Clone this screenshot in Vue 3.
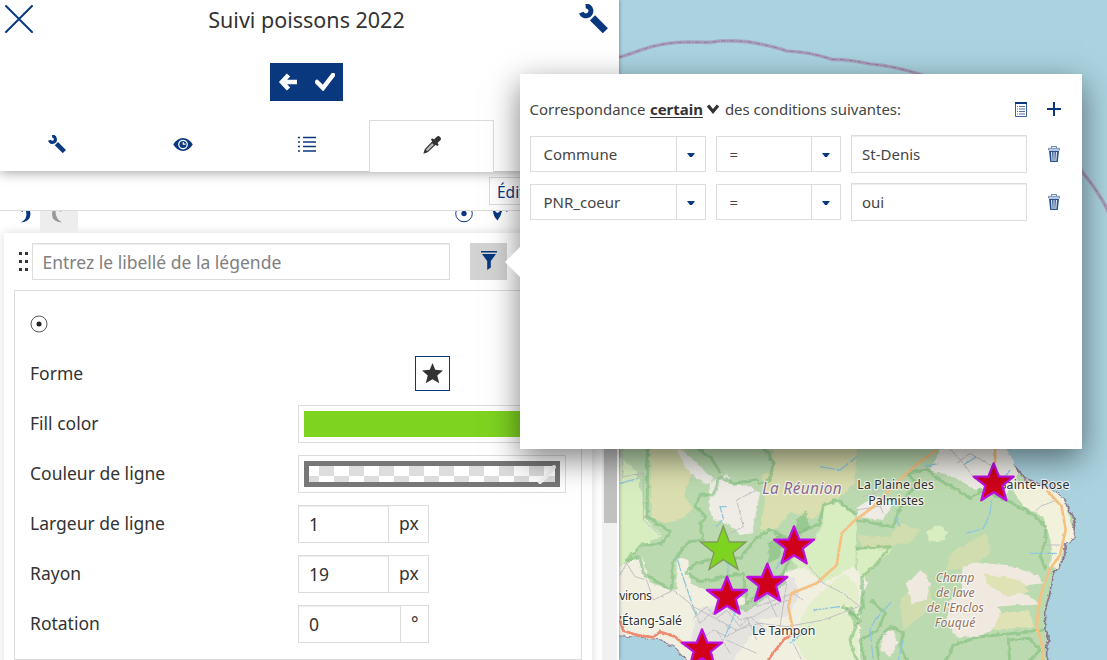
<script setup>
const tabs = ['wrench', 'eye', 'list', 'dropper']
const measures = [
  { label: 'Largeur de ligne', value: '1', unit: 'px' },
  { label: 'Rayon', value: '19', unit: 'px' },
  { label: 'Rotation', value: '0', unit: '°', narrow: true },
]
const conditions = [
  { attr: 'Commune', op: '=', value: 'St-Denis' },
  { attr: 'PNR_coeur', op: '=', value: 'oui' },
]
const redStars = [[552, 256], [472, 368], [351, 407], [276, 565], [1151, 67]]
</script>

<template>
  <div class="app">
    <aside class="panel">
      <header class="head">
        <div class="titlebar">
          <svg class="close" viewBox="0 0 28 28"><path d="M1 1 27 27M27 1 1 27" /></svg>
          <h1>Suivi poissons 2022</h1>
          <svg class="big-wrench" viewBox="0 0 88 88"><path class="w-head" d="M7 26A15 15 0 1 0 20 6" /><path class="w-arm" d="M41 42 80 81" /></svg>
        </div>
        <div class="actions">
          <svg viewBox="0 0 20 18"><path d="M10.500 2 4 9 10.500 16M4 9H19" /></svg>
          <svg viewBox="0 0 20 18"><path d="M2 9 8 15 18 2" /></svg>
        </div>
        <nav class="tabs">
          <div v-for="t in tabs" :key="t" class="tab" :class="{ active: t === 'dropper' }">
            <svg v-if="t === 'wrench'" class="ic18" viewBox="0 0 88 88"><path class="w-head" d="M7 26A15 15 0 1 0 20 6" /><path class="w-arm" d="M41 42 80 81" /></svg>
            <svg v-else-if="t === 'eye'" class="eye" viewBox="0 0 60 40"><path fill="#0a387f" d="M0 20Q12 0 30 0T60 20Q48 40 30 40T0 20Z" /><circle cx="30" cy="20" r="15" fill="#fff" /><circle cx="30" cy="20" r="11" fill="#0a387f" /><path d="M31 13v6h7" fill="none" stroke="#fff" stroke-width="4" /></svg>
            <svg v-else-if="t === 'list'" class="ic18" viewBox="0 0 18 18"><path d="M0 2.500h2m3 0h13M0 7h2m3 0h13M0 11.500h2m3 0h13M0 16h2m3 0h13" fill="none" stroke="#0a387f" stroke-width="1.400" /></svg>
            <svg v-else class="ic18" viewBox="0 0 54 54"><path d="M5 49 8 39 30 16 38 24 15 46Z" fill="#bbb" stroke="#333" stroke-width="3.500" /><path d="M28 11 43 26" stroke="#333" stroke-width="7" stroke-linecap="round" /><path d="M35 19 46 8" stroke="#333" stroke-width="15" stroke-linecap="round" /><path d="M1 53 15 48 6 39Z" fill="#333" /></svg>
          </div>
        </nav>
      </header>
      <div class="subbar"><button class="edit">Éditer</button></div>
      <div class="scroller">
        <div class="content">
          <div class="cutrow">
            <svg class="moon1" viewBox="0 0 10 12"><path d="M5 0Q7 8 0 11.500Q9 11 9.500 3L9 0ZM0 0H2V1Z" fill="#0a387f" /></svg>
            <span class="greytab"><svg viewBox="0 0 10 12"><path d="M3.500 0Q3.500 8 10 11.500Q0 11 0 3L.5 0ZM7.500 0H9.500L8.500 1Z" fill="#999" /></svg></span>
            <svg class="cutdot" viewBox="0 0 20 12"><circle cx="10" cy="2.500" r="8.300" fill="#fff" stroke="#0a387f" /><circle cx="10" cy="2.500" r="2.700" fill="#0a387f" /></svg>
            <svg class="cutpin" viewBox="0 0 18 12"><path d="M1 0H10Q9 5 5.500 9.500Q1 5 1 0Z" fill="#0a387f" /><circle cx="5.500" cy="-.5" r="2.300" fill="#fff" /><path d="M14 .3h1.500" stroke="#0a387f" stroke-width=".7" /></svg>
          </div>
          <section class="card">
            <div class="legend">
              <span class="grip"><i v-for="n in 6" :key="n"></i></span>
              <div class="legend-input">Entrez le libellé de la légende</div>
              <button class="filter"><svg viewBox="0 0 16 19"><path d="M0 0H16V1.500H0ZM1 3H15L9.800 10V16.500L6.200 19V10Z" fill="#0a387f" /></svg></button>
            </div>
            <div class="fieldset">
              <svg class="point" viewBox="0 0 18 18"><circle cx="9" cy="9" r="8" /><circle cx="9" cy="9" r="2.500" class="core" /></svg>
              <div class="row"><label>Forme</label><div class="shape"><svg viewBox="0 0 62 62"><path d="M31 0 39 20 62 22 45 37 51 60 31 48 11 60 17 37 0 22 23 20Z" fill="#333" /></svg></div></div>
              <div class="row"><label>Fill color</label><div class="color"><div class="green"></div></div></div>
              <div class="row"><label>Couleur de ligne</label><div class="color"><div class="checker"><svg viewBox="0 0 18 19"><path d="M2 17 10 10 16 2" /></svg></div></div></div>
              <div v-for="m in measures" :key="m.label" class="row">
                <label>{{ m.label }}</label>
                <div class="measure"><span class="val">{{ m.value }}</span><span class="unit" :class="{ narrow: m.narrow }">{{ m.unit }}</span></div>
              </div>
            </div>
          </section>
        </div>
        <div class="track"><div class="thumb"></div></div>
      </div>
    </aside>

    <svg class="map" viewBox="27 0 1464 1980" preserveAspectRatio="none">
      <defs>
        <filter id="organic" x="-5%" y="-5%" width="110%" height="110%"><feTurbulence type="fractalNoise" baseFrequency=".06" numOctaves="3" seed="4" result="n" /><feDisplacementMap in="SourceGraphic" in2="n" scale="13" xChannelSelector="R" yChannelSelector="G" /></filter>
        <filter id="wobble" x="-5%" y="-5%" width="110%" height="110%"><feTurbulence type="fractalNoise" baseFrequency=".09" numOctaves="2" seed="9" result="n" /><feDisplacementMap in="SourceGraphic" in2="n" scale="7" xChannelSelector="R" yChannelSelector="G" /></filter>
      </defs>
      <rect x="27" width="1464" height="1980" fill="#aad3df" />
      <g fill="none">
        <path d="M27 172Q60 162 95 149Q160 127 235 126L300 127L330 123Q400 120 450 132Q500 142 530 153Q600 156 665 178Q720 178 780 192Q850 198 920 220C1150 290 1340 390 1420 520Q1470 580 1500 645" stroke="#a99bb8" stroke-width="11" opacity=".8" />
        <path d="M27 172Q60 162 95 149Q160 127 235 126L300 127L330 123Q400 120 450 132Q500 142 530 153Q600 156 665 178Q720 178 780 192Q850 198 920 220C1150 290 1340 390 1420 520Q1470 580 1500 645" stroke="#926b98" stroke-width="2.500" stroke-dasharray="14 4 4 4" />
      </g>
      <g transform="translate(0 1320)">
        <g filter="url(#organic)">
          <path d="M10 -20H1165L1181 27L1211 75L1250 120L1310 140L1361 175L1381 220L1396 240L1388 270L1395 295L1365 310V345L1345 385L1328 400L1320 460L1308 500L1305 560L1318 600L1310 620V680H245L200 625L150 598L90 590L10 585Z" fill="#bcdab0" stroke="#8b7590" stroke-width="5" stroke-linejoin="round" />
          <!-- vegetation -->
          <g fill="#dbdfaf">
            <path d="M120 10H205L240 55L250 90L220 165L250 205L210 240L160 250L125 230Z" />
            <path d="M490 10H740L735 130L690 170L650 190L610 240L540 215L500 265L450 270L465 190L455 110L490 90Z" />
            <path d="M745 285L840 290L870 250L930 270L900 310L850 315L800 360L745 300ZM1020 340L1130 280L1140 340L1080 385L1010 390ZM870 480L950 395L970 500L880 570Z" opacity=".65" />
          </g>
          <path d="M10 40L80 90L110 240L155 285L95 320L50 360L10 400ZM640 195L690 190L740 235L735 400L700 470L600 440L570 390L545 360L610 300L640 250ZM741 325L845 330L770 400L741 490ZM950 275L990 255L1015 275L1005 300L960 305Z" fill="#d9eec0" />
          <path d="M300 130L350 100L365 130L420 140L450 160L440 210L425 280L390 285L350 250L310 240L295 190ZM190 10L250 60L310 120L290 135L230 90ZM1000 10H1181L1225 100L1190 160L1100 150L1030 110L960 90ZM741 200L800 170L850 190L820 240L741 230Z" fill="#eeece5" />
          <path d="M10 390L95 345L120 430L200 450L200 350L235 360L240 430L300 455L360 470L440 480L520 400L580 380L640 430L730 380L775 430L750 470L750 680H250L200 625L150 598L90 590L10 585Z" fill="#f0efe0" />
          <path d="M270 505L360 490L430 510L460 560L420 590L370 660H270L240 600ZM430 470L550 410L570 460L530 530L420 540Z" fill="#dedede" opacity=".7" />
          <path d="M1190 120L1310 140L1361 175L1395 295L1365 310L1345 385L1320 380L1325 310L1300 230L1240 200Z" fill="#f2f1dc" />
          <path d="M1055 380L1100 368L1190 375L1280 405L1300 430L1210 440L1290 490L1160 500L1190 540L1110 590L1040 590L1010 550L1020 480L1060 460ZM890 430L935 390L960 430L950 480L905 490ZM820 580L850 570L865 610L840 650L810 630Z" fill="#f0e9df" />
          <path d="M1120 400L1230 420L1260 455L1190 470L1130 430ZM1170 520L1260 510L1270 560L1150 570Z" fill="#dfe2b5" />
          <path d="M590 500L640 450L700 400L745 440V680H600L550 600Z" fill="#e3efcb" />
          <!-- inner shade along protected areas -->
          <g fill="none" stroke="#80be7b" stroke-width="9" stroke-linejoin="round" stroke-linecap="round" opacity=".6">
            <path d="M112 10V230L180 275L155 310L95 315L50 360L90 350L100 400L185 450L190 365L235 305L280 300L270 250L290 230L255 200L270 165L310 165L330 110L370 130L440 120" />
            <path d="M450 10L490 65L480 120L445 130M240 10L300 50L330 95M480 270L530 295L630 250L640 195L680 180L735 220M225 395L260 370L330 350L390 355L430 305L475 270M225 395L270 425L400 400L410 490L520 400L545 340" />
            <path d="M741 240L850 260L875 190L920 130L890 100L950 90L990 120L1085 175L1110 150L1190 180L1270 225L1307 260V300L1290 345L1305 385M741 325L840 320L800 370L755 410L760 500L741 530M1010 660L1030 615L1110 590L1270 575L1300 570M770 680L750 600L805 570L825 520L785 480M810 680L800 610L840 560L880 580L870 620L900 680M1200 680L1195 600L1260 595L1290 630L1240 680M700 500L750 540L720 600L745 680" />
          </g>
          <g fill="#6db36f" opacity=".45"><path d="M560 240L590 210L600 260L560 285ZM475 310L515 280L510 350L475 370ZM705 500L730 505L750 550L735 560ZM375 500L430 480L520 400L530 430L410 515Z" /></g>
        </g>
        <g filter="url(#wobble)">
          <!-- streams -->
          <path d="M320 260L340 235L330 200L350 200M355 360L350 460L375 520L340 600M200 350L215 400L260 530M1145 180L1140 220L1120 265L1070 280M845 485L795 540L780 570L790 660M880 600L865 660M520 350L490 400M540 610L600 560M630 80L690 90L741 50M1060 75L1100 50M945 80L985 70M1260 340L1340 340M1200 90L1170 130M610 510L690 500M30 130L85 115M870 260L855 230" fill="none" stroke="#8fc7dc" stroke-width="4" stroke-dasharray="45 5" />
          <!-- minor roads -->
          <g fill="none" stroke="#c2bfc2" stroke-width="3">
            <path d="M38 27V110L100 100V240L150 285M27 410L50 370L75 410L110 420L130 480L190 450L240 490L270 550L300 520L350 500L390 540L430 530L500 490L540 480M350 285L400 260L380 180L440 150M590 370L640 430L700 460L750 500M250 500L380 570L450 550L530 560L640 540L745 500M320 570L360 640M410 530L440 600M350 600L440 640M550 610L575 660M1020 27L1060 70L1090 110M1260 230L1290 200L1340 180M1305 315L1350 315" />
            <path d="M250 535L290 500L320 535L350 510L390 560L420 530L470 570M270 600L310 570L350 590L420 550M440 500L550 460L580 480M470 460L500 530M530 430L510 560M760 170L850 140M780 130L820 220M741 210L860 190M1040 70L1080 40L1150 80L1190 130" />
          </g>
          <!-- primary roads -->
          <path d="M550 575L535 500L545 460L620 430L680 375L695 280L730 245L790 200L880 110L930 65L980 30M1155 20V70M1310 150L1355 200L1367 270L1350 345L1318 390L1290 470L1280 560L1297 620V670" fill="none" stroke="#f5c183" stroke-width="8" stroke-linejoin="round" />
          <path d="M20 510L40 572L80 585L130 592L150 575L195 590L230 620M470 665L520 600L550 580" fill="none" stroke="#ee8b70" stroke-width="8" />
        </g>
        <g class="maptext" fill="#333">
          <text x="457" y="161" textLength="238" class="region">La Réunion</text>
          <text x="742" y="147" textLength="230">La Plaine des</text>
          <text x="775" y="195" textLength="167">Palmistes</text>
          <text x="1169" y="147" textLength="209">Sainte-Rose</text>
          <text x="28" y="481" textLength="98">virons</text>
          <text x="28" y="554" textLength="188">'Étang-Salé</text>
          <text x="426" y="585" textLength="190">Le Tampon</text>
          <g class="lava" text-anchor="middle">
            <text x="1035" y="427" textLength="116">Champ</text>
            <text x="1036" y="472" textLength="116">de lave</text>
            <text x="1036" y="516" textLength="171">de l'Enclos</text>
            <text x="1035" y="560" textLength="122">Fouqué</text>
          </g>
        </g>
        <path d="M340 258 358 306 408 306 369 338 384 388 340 359 297 388 312 338 271 306 322 306Z" fill="#7ed321" stroke="#7f9b5e" stroke-width="4" />
        <path v-for="([x, y], i) in redStars" :key="i" :transform="`translate(${x} ${y})`" d="M0 3 16 43 60 43 26 70 38 114 0 90 -37 114 -25 70 -60 43 -16 43Z" fill="#d0021b" stroke="#bd10e0" stroke-width="7" stroke-linejoin="round" />
      </g>
    </svg>

    <div class="popover">
      <div class="pop-head">
        <span>Correspondance</span><b>certain</b>
        <svg class="chev" viewBox="0 0 14 12"><path d="M2 2.500 7 8.500 12 2.500" /></svg>
        <span>des conditions suivantes:</span>
        <svg class="table" viewBox="0 0 12 15"><path d="M.5 1V14.500H11.500V1" fill="none" stroke="#3c6098" /><path d="M0 0H12V2H0Z" fill="#0a387f" /><path d="M2 4.500h1m1 0h6M2 7h1m1 0h6M2 9.500h1m1 0h6M2 12h1m1 0h6" stroke="#3c6098" stroke-width=".9" /></svg>
        <svg class="plus" viewBox="0 0 14 14"><path d="M7 0V14M0 7H14" stroke="#0a387f" stroke-width="2" /></svg>
      </div>
      <div v-for="c in conditions" :key="c.attr" class="cond">
        <div class="select"><span>{{ c.attr }}</span><i><svg viewBox="0 0 8 4"><path d="M0 0H8L5 4H3Z" /></svg></i></div>
        <div class="select op"><span>{{ c.op }}</span><i><svg viewBox="0 0 8 4"><path d="M0 0H8L5 4H3Z" /></svg></i></div>
        <div class="text">{{ c.value }}</div>
        <svg class="trash" viewBox="0 0 12 16"><path d="M3.500 2V.5H8.500V2M.5 4V2.300H11.500V4Z" fill="none" stroke="#5f7fb0" stroke-width=".9" /><path d="M1 5H11L9.800 16H2.200Z" fill="#2a5290" /><path d="M3.500 6 4.200 15M6 6V15M8.500 6 7.800 15" stroke="#e8edf5" stroke-width="1.100" /></svg>
      </div>
    </div>
  </div>
</template>

<style>
body { margin: 0; overflow: hidden; }
</style>

<style scoped>
* { box-sizing: border-box; }
.app { position: relative; display: grid; grid-template-columns: 619px 488px; width: 1107px; height: 660px; overflow: hidden; font-family: "Noto Sans", sans-serif; color: #333; }
svg { display: block; }
.panel { display: flex; flex-direction: column; height: 660px; background: #fff; z-index: 1; box-shadow: 0 0 4px rgba(0,0,0,.4); min-width: 0; }
.head { flex: none; height: 171px; display: flex; flex-direction: column; background: #fff; box-shadow: 0 1px 12px rgba(0,0,0,.4); z-index: 2; clip-path: inset(0 0 -20px 0); }
.titlebar { height: 40px; display: flex; justify-content: space-between; padding: 5px 11px 0 5px; }
.close { width: 28px; height: 28px; fill: none; stroke: #0a387f; stroke-width: 2; stroke-linecap: round; }
h1 { margin: 0 0 0 1px; font-size: 21.500px; font-weight: 400; line-height: 30px; }
.big-wrench { width: 29px; height: 29px; margin-top: -1px; }
.w-head { fill: none; stroke: #0a387f; stroke-width: 15; }
.w-arm { fill: none; stroke: #0a387f; stroke-width: 22; }
.actions { width: 73px; height: 38px; margin: 23px 0 0 270px; background: #0a387f; display: flex; align-items: center; gap: 17px; padding-left: 8px; }
.actions svg { width: 20px; height: 18px; fill: none; stroke: #fff; stroke-width: 4.500; }
.actions svg:last-child { stroke-linecap: round; }
.tabs { display: grid; grid-template-columns: repeat(4, 125px); margin: 19px 0 0 -6px; height: 51px; }
.tab { display: flex; align-items: center; justify-content: center; height: 48px; }
.tab:nth-child(2) { padding-left: 2px; }
.tab.active { height: 52px; padding-bottom: 4px; border: 1px solid #dcdcdc; border-bottom: 0; background: #fff; }
.ic18 { width: 18px; height: 18px; }
.eye { width: 20px; height: 13px; }
.subbar { flex: none; height: 40px; border-bottom: 1px solid #dcdcdc; padding: 6px 0 0 489px; background: #fff; }
.edit { font: 15.500px/28px "Noto Sans", sans-serif; height: 28px; padding: 0 7px; border: 1px solid #dcdcdc; background: #fff; color: #0a387f; }
.scroller { flex: 1; display: flex; justify-content: space-between; overflow: hidden; padding-right: 2px; }
.content { width: 602px; overflow: hidden; }
.cutrow { height: 22px; display: flex; }
.moon1 { width: 10px; height: 12px; margin: 0 9px 0 21px; }
.greytab { width: 38px; height: 22px; background: #ededed; padding-left: 12px; }
.greytab svg { width: 10px; height: 12px; }
.cutdot { width: 20px; height: 12px; margin-left: 376px; }
.cutpin { width: 18px; height: 12px; margin-left: 18px; }
.card { width: 588px; height: 460px; margin-left: 4px; background: #fff; box-shadow: 0 0 10px rgba(0,0,0,.14); padding: 10px; }
.legend { display: flex; height: 37px; }
.grip { width: 18px; display: grid; grid-template-columns: 3px 3px; grid-auto-rows: 3px; gap: 5px 3px; padding: 9px 0 0 5px; }
.grip i { background: #333; }
.legend-input { width: 418px; height: 37px; border: 1px solid #dcdcdc; box-shadow: inset 0 1px 1px rgba(0,0,0,.07); padding-left: 9.500px; font-size: 17.500px; line-height: 36px; color: #808080; }
.filter { width: 37px; height: 37px; margin-left: 20px; border: 0; padding: 8px 0 0; background: #d3d3d3; display: flex; justify-content: center; }
.filter svg { width: 16px; height: 19px; }
.fieldset { width: 568px; height: 370px; margin-top: 10px; border: 1px solid #dcdcdc; padding: 24px 15px 0; }
.point { width: 18px; height: 18px; fill: #fff; stroke: #444; stroke-width: .9; }
.point .core { fill: #222; stroke: none; }
.row { height: 50px; display: flex; align-items: center; font-size: 17.500px; }
.point + .row { margin-top: 16px; }
.row label { width: 268px; line-height: 24px; padding-bottom: 3px; }
.shape { width: 35px; height: 35px; border: 1px solid #0a387f; margin: 0 0 2px 117px; padding: 6px; }
.shape svg { width: 21px; height: 21px; }
.color { width: 268px; height: 38px; border: 1px solid #dcdcdc; padding: 5px; }
.green { height: 26px; background: #7ed321; }
.checker { height: 26px; border: 5px solid #777; background: conic-gradient(#ddd 25%, #fff 0 50%, #ddd 0 75%, #fff 0) -5px -5px / 30px 30px; display: flex; justify-content: flex-end; align-items: center; }
.checker svg { width: 18px; height: 19px; fill: none; stroke: #f6f6f6; stroke-width: 4; stroke-linecap: round; margin-right: -1px; }
.measure { width: 131px; height: 38px; display: flex; border: 1px solid #dcdcdc; line-height: 36px; }
.val { flex: 1; padding-left: 10px; box-shadow: inset 0 1px 1px rgba(0,0,0,.07); }
.unit { width: 40px; border-left: 1px solid #dcdcdc; padding-left: 10px; line-height: 35px; }
.unit.narrow { width: 28px; }
.track { width: 15px; background: #f1f1f1; padding: 0 0 0 2px; }
.thumb { height: 312px; background: #c1c1c1; }
.map { width: 488px; height: 660px; }
.maptext { font-family: "Noto Sans", sans-serif; font-size: 37px; paint-order: stroke; stroke: rgba(255,255,255,.7); stroke-width: 7px; stroke-linejoin: round; }
.region { font-size: 46px; font-style: italic; fill: #8d6b96; }
.lava { font-style: italic; fill: #947460; }
.popover { position: absolute; z-index: 3; left: 520px; top: 74px; width: 562px; height: 375px; background: #fff; box-shadow: 0 10px 30px rgba(0,0,0,.5); padding: 19px 10px; }
.popover::before { content: ""; position: absolute; left: -15px; top: 173px; width: 15px; height: 30px; background: #fff; clip-path: polygon(0 50%, 100% 0, 100% 100%); }
.pop-head { height: 32px; display: flex; align-items: center; font-size: 14.950px; white-space: nowrap; padding-right: 11px; color: #444; }
.pop-head span:first-child { margin-left: -.5px; }
.pop-head b { margin-left: 4.500px; color: #333; text-decoration: underline; text-underline-offset: 2px; }
.chev { width: 14px; height: 12px; margin: 0 5px 0 3px; fill: none; stroke: #333; stroke-width: 3.300; }
.table { width: 12px; height: 15px; margin-left: auto; margin-right: 20px; }
.plus { width: 14px; height: 14px; }
.cond { display: flex; align-items: center; gap: 10px; font-size: 15px; height: 38px; margin-top: 10px; color: #444; }
.select { width: 176px; height: 36px; border: 1px solid #dcdcdc; display: flex; line-height: 35px; }
.select.op { width: 125px; }
.select span { flex: 1; padding-left: 12.500px; }
.select i { width: 29px; border-left: 1px solid #dcdcdc; display: flex; align-items: center; justify-content: center; }
.select i svg { width: 8px; height: 4px; fill: #0a387f; margin-top: 2px; }
.text { width: 176px; height: 38px; border: 1px solid #dcdcdc; box-shadow: inset 0 1px 1px rgba(0,0,0,.07); padding-left: 10px; line-height: 37px; }
.trash { width: 12px; height: 16px; margin-left: 11px; }
</style>
